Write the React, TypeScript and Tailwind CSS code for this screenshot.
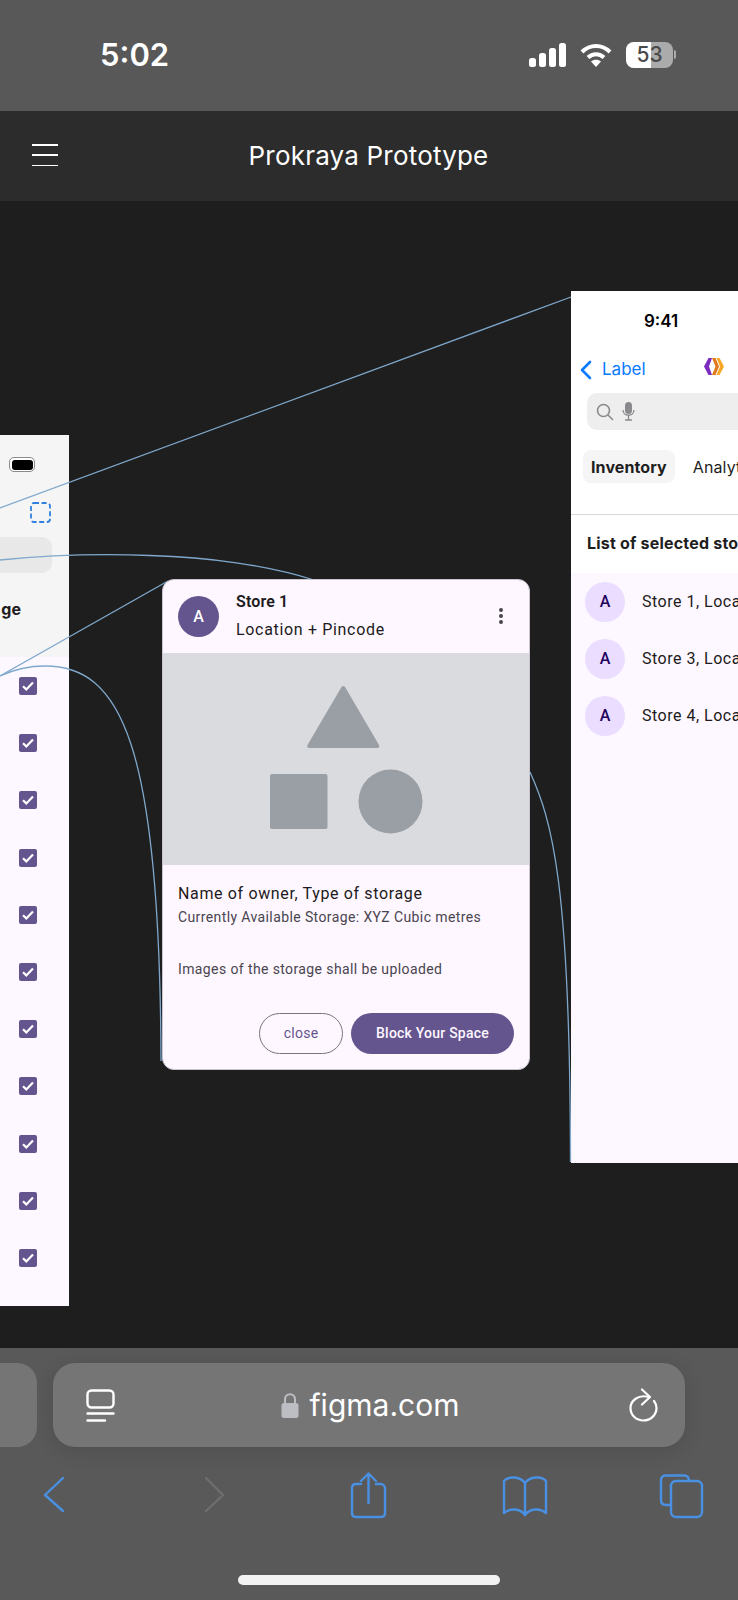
const checks = Array.from({ length: 11 });

function StatusBar() {
  return (
    <div className="h-[111px] shrink-0 bg-[#585858] flex items-center justify-between pl-[100px] pr-[62px]">
      <span className="text-[31px] leading-none font-semibold text-white -mt-[2px] font-['Inter',sans-serif]">5:02</span>
      <div className="flex items-center gap-[14px] -mt-[2px]">
        <svg width="37" height="24" viewBox="0 0 37 24" fill="#fff">
          <rect x="0" y="15" width="7" height="9" rx="2.5" />
          <rect x="10" y="10" width="7" height="14" rx="2.5" />
          <rect x="20" y="5" width="7" height="19" rx="2.5" />
          <rect x="30" y="0" width="7" height="24" rx="2.5" />
        </svg>
        <svg width="32" height="24" viewBox="0 0 32 24" fill="none" stroke="#fff" strokeWidth="4" strokeLinecap="butt">
          <path d="M2 9 C 10 1, 22 1, 30 9" />
          <path d="M8 14.5 C 12.5 10, 19.5 10, 24 14.5" />
          <path d="M16 24 L11 18.5 C 13.5 16, 18.5 16, 21 18.5 Z" fill="#fff" stroke="none" />
        </svg>
        <div className="flex items-center gap-[1px]">
          <div className="relative w-[47px] h-[26px] rounded-[8px] overflow-hidden bg-[#ababab] flex">
            <div className="w-[25px] bg-white" />
            <span className="absolute inset-0 flex items-center justify-center text-[21px] font-medium text-[#4a4a4a] font-['Inter',sans-serif]">53</span>
          </div>
          <div className="w-[2px] h-[9px] rounded-r-full bg-[#ababab]" />
        </div>
      </div>
    </div>
  );
}

function Header() {
  return (
    <div className="relative h-[90px] shrink-0 bg-[#2c2c2c] flex items-center justify-center">
      <div className="absolute left-[32px] top-[33px] w-[26px] h-[22px] flex flex-col justify-between">
        <div className="h-[1.5px] bg-white" />
        <div className="h-[1.5px] bg-white" />
        <div className="h-[1.5px] bg-white" />
      </div>
      <span className="text-[26px] leading-none text-white tracking-[0.2px] font-['Inter',sans-serif] ml-[-1px]">Prokraya Prototype</span>
    </div>
  );
}

function LeftFrame() {
  return (
    <div className="absolute left-0 top-[234px] w-[69px] h-[871px] bg-[#f5f5f5] overflow-hidden flex flex-col">
      <div className="h-[222px] shrink-0 flex flex-col items-end">
        <div className="mt-[22px] mr-[34px] w-[26px] h-[15px] rounded-[5px] border border-[#8a8a8a] p-[1.5px] bg-white">
          <div className="w-full h-full rounded-[3px] bg-black" />
        </div>
        <svg width="21" height="21" viewBox="0 0 21 21" fill="none" stroke="#2f80dc" strokeWidth="1.8" strokeDasharray="5 2.6" className="mt-[30px] mr-[18px]">
          <rect x="1" y="1" width="19" height="19" rx="3" />
        </svg>
        <div className="mt-[14px] mr-[17px] w-full h-[36px] rounded-r-[10px] bg-[#e8e8e8]" />
        <div className="mt-[21px] w-full text-[16px] font-bold leading-[30px] text-[#1d1b20] text-right pr-[48px] font-['Inter',sans-serif]">ge</div>
      </div>
      <div className="flex-1 bg-[#fdf7ff] flex flex-col items-end pr-[32px] pt-[20px] gap-[39.2px]">
        {checks.map((_, i) => (
          <div key={i} className="w-[18px] h-[18px] shrink-0 rounded-[2px] bg-[#65558f] flex items-center justify-center">
            <svg width="12" height="10" viewBox="0 0 12 10" fill="none" stroke="#fff" strokeWidth="2.2">
              <path d="M1 5.2 L4.3 8.4 L11 1.4" />
            </svg>
          </div>
        ))}
      </div>
    </div>
  );
}

function StoreCard() {
  return (
    <div className="absolute left-[162px] top-[378px] w-[368px] h-[491px] rounded-[12px] bg-[#fef7ff] border border-[#cac4d0] overflow-hidden flex flex-col font-['Roboto',sans-serif]">
      <div className="h-[73px] shrink-0 flex items-center px-[15px]">
        <div className="w-[41px] h-[41px] rounded-full bg-[#65558f] flex items-center justify-center text-white text-[16px] font-medium">A</div>
        <div className="ml-[17px] flex-1 -mt-[2px]">
          <div className="text-[16px] leading-[24px] font-semibold text-[#1d1b20] tracking-[0.15px]">Store 1</div>
          <div className="text-[16px] leading-[24px] mt-[4px] text-[#1d1b20] tracking-[0.67px]">Location + Pincode</div>
        </div>
        <svg width="4" height="16" viewBox="0 0 4 16" fill="#49454f" className="mr-[11px] -mt-[2px]">
          <circle cx="2" cy="2" r="2" />
          <circle cx="2" cy="8" r="2" />
          <circle cx="2" cy="14" r="2" />
        </svg>
      </div>
      <div className="h-[212px] shrink-0 bg-[#d9dbde] flex flex-col items-center">
        <svg width="366" height="212" viewBox="0 0 366 212" fill="#9a9ea5">
          <path d="M178.5 34 C179.5 32.5 181 32.5 182 34 L216 92 C216.8 93.7 216 95 214 95 L146.5 95 C144.5 95 143.8 93.7 144.5 92 Z" />
          <rect x="107" y="121" width="57.5" height="55" rx="2" />
          <circle cx="227.5" cy="148.5" r="32" />
        </svg>
      </div>
      <div className="flex-1 flex flex-col px-[15px]">
        <div className="mt-[17px] text-[16px] leading-[24px] text-[#1d1b20] tracking-[0.64px]">Name of owner, Type of storage</div>
        <div className="text-[14px] leading-[20px] text-[#49454f] tracking-[0.39px] mt-[1px]">Currently Available Storage: XYZ Cubic metres</div>
        <div className="mt-[32px] text-[14px] leading-[20px] text-[#49454f] tracking-[0.39px]">Images of the storage shall be uploaded</div>
        <div className="mt-[34px] flex justify-end gap-[8px]">
          <div className="w-[84px] h-[41px] rounded-full border border-[#79747e] flex items-center justify-center text-[14px] font-normal tracking-[0.25px] text-[#65558f]">close</div>
          <div className="w-[163px] h-[41px] rounded-full bg-[#65558f] flex items-center justify-center text-[14px] font-medium tracking-[0.22px] text-[#fdf7ff]">Block Your Space</div>
        </div>
      </div>
    </div>
  );
}

function RightFrame() {
  return (
    <div className="absolute left-[571px] top-[90px] w-[167px] h-[872px] bg-white overflow-hidden flex flex-col">
      <div className="h-[282px] shrink-0 flex flex-col">
        <div className="mt-[19px] pl-[73px] text-[17px] leading-[22px] font-semibold text-black font-['Inter',sans-serif]">9:41</div>
        <div className="mt-[24px] h-[28px] flex items-center pl-[8px] relative">
          <svg width="13" height="20" viewBox="0 0 13 20" fill="none" stroke="#0a7aff" strokeWidth="2.6" strokeLinecap="round" strokeLinejoin="round">
            <path d="M11 2 L3 10 L11 18" />
          </svg>
          <span className="ml-[10px] text-[17px] text-[#0a7aff] font-['Inter',sans-serif]">Label</span>
          <svg width="20" height="17" viewBox="0 0 20 17" className="absolute left-[133px] top-[2px]">
            <path d="M4.5 0 H8 L5 8.5 L8 17 H4.5 L0 8.5 Z" fill="#7b2cbf" />
            <path d="M8 0 H11.5 L15 8.5 L11.5 17 H8 L11.5 8.5 Z" fill="#e07a1f" />
            <path d="M12.5 0 H15.5 L20 8.5 L15.5 17 H12.5 L16 8.5 Z" fill="#f9a825" />
          </svg>
        </div>
        <div className="mt-[9px] ml-[16px] h-[37px] rounded-l-[10px] bg-[#eeeeee] flex items-center pl-[9px] gap-[8px]">
          <svg width="18" height="18" viewBox="0 0 18 18" fill="none" stroke="#8a8a8e" strokeWidth="1.6">
            <circle cx="7.5" cy="7.5" r="6" />
            <path d="M12 12 L17 17" />
          </svg>
          <svg width="13" height="19" viewBox="0 0 13 19" fill="none" stroke="#8a8a8e" strokeWidth="1.3">
            <rect x="3" y="0" width="7" height="12" rx="3.5" fill="#8a8a8e" stroke="none" />
            <path d="M1 8 C1 15, 12 15, 12 8 M6.5 13.5 V18 M3 18 H10" />
          </svg>
        </div>
        <div className="mt-[20px] flex items-center pl-[12px]">
          <div className="h-[33px] rounded-[8px] bg-[#f5f5f5] px-[8px] flex items-center text-[16px] font-bold text-[#1e1e1e] font-['Inter',sans-serif] tracking-[0.1px]">Inventory</div>
          <span className="ml-[18px] text-[16px] text-[#1e1e1e] font-['Inter',sans-serif] tracking-[0.1px] whitespace-nowrap">Analytics</span>
        </div>
        <div className="mt-[31px] h-px bg-[#d9d9d9]" />
        <div className="mt-[16px] pl-[16px] text-[16px] leading-[24px] font-bold text-[#1e1e1e] tracking-[0.2px] font-['Inter',sans-serif] whitespace-nowrap">List of selected stores</div>
      </div>
      <div className="flex-1 bg-[#fdf7ff] flex flex-col pt-[9px] pl-[14px] gap-[17px] font-['Roboto',sans-serif]">
        {["Store 1, Location", "Store 3, Location", "Store 4, Location"].map((s) => (
          <div key={s} className="flex items-center h-[40px]">
            <div className="w-[40px] h-[40px] shrink-0 rounded-full bg-[#eaddff] flex items-center justify-center text-[16px] font-medium text-[#21005d]">A</div>
            <span className="ml-[17px] text-[16px] text-[#1d1b20] tracking-[0.5px] whitespace-nowrap">{s}</span>
          </div>
        ))}
      </div>
    </div>
  );
}

function Connectors() {
  return (
    <svg className="absolute inset-0" width="738" height="1148" viewBox="0 0 738 1148" fill="none" stroke="#7fa8cc" strokeWidth="1.3">
      <path d="M0 307 L571 96" />
      <path d="M0 359 C60 353 110 353 150 354.5 C210 356 270 365 314 379" />
      <path d="M0 475 L168 380" />
      <path d="M0 475 C15 468 30 465 45 465 C120 465 160 540 161 860" />
      <path d="M530 571 C552 620 570 680 570.5 961" />
    </svg>
  );
}

function Canvas() {
  return (
    <div className="relative flex-1 bg-[#1e1e1e] overflow-hidden">
      <LeftFrame />
      <RightFrame />
      <Connectors />
      <StoreCard />
    </div>
  );
}

function BottomBar() {
  const blue = "#4a90e2";
  return (
    <div className="relative h-[252px] shrink-0 bg-[#595959] flex flex-col">
      <div className="mt-[15px] flex gap-[16px] h-[84px]">
        <div className="w-[37px] shrink-0 rounded-r-[20px] bg-[#757575]" />
        <div className="w-[632px] rounded-[22px] bg-[#757575] flex items-center justify-between pl-[33px] pr-[27px] shadow-[0_4px_20px_rgba(0,0,0,0.12)]">
          <svg width="29" height="33" viewBox="0 0 29 33" fill="none" stroke="#fff" strokeWidth="2.4" strokeLinecap="round">
            <rect x="1.5" y="1.5" width="26" height="17" rx="4" />
            <path d="M1.5 24.5 H27.5 M1.5 31.5 H19" />
          </svg>
          <div className="flex items-center gap-[11px] -ml-[4px]">
            <svg width="18" height="25" viewBox="0 0 18 25" fill="#bdbdc4">
              <path d="M4 11 V6.5 C4 -0.5 14 -0.5 14 6.5 V11" fill="none" stroke="#bdbdc4" strokeWidth="2" />
              <rect x="0.5" y="10" width="17" height="15" rx="2.5" />
            </svg>
            <span className="text-[30px] leading-none text-white font-['Inter',sans-serif]">figma.com</span>
          </div>
          <svg width="29" height="34" viewBox="0 0 29 34" fill="none" stroke="#fff" strokeWidth="2.2" strokeLinecap="round" strokeLinejoin="round">
            <path d="M20 9 C9 6 1.5 13 1.5 20 C1.5 27.5 7.5 32.5 14.5 32.5 C21.5 32.5 27.5 27 27.5 20 C27.5 17 26.5 15 25 13" />
            <path d="M13 1.5 L21 9 L13 16.5" />
          </svg>
        </div>
      </div>
      <div className="absolute top-[124px] left-0 w-full h-[50px]">
        <svg width="738" height="50" viewBox="0 0 738 50" fill="none" stroke={blue} strokeWidth="2.4" strokeLinecap="round" strokeLinejoin="round">
          <path d="M63 6 L45 23 L63 39" />
          <path d="M206 6 L223 23 L206 39" stroke="#6e6e6e" />
          <g>
            <path d="M361 12 H356 C353 12 352 14 352 16 V41 C352 44 354 45 356 45 H381 C384 45 385 43 385 41 V16 C385 14 383 12 381 12 H376" />
            <path d="M368.5 31 V2 M361 9 L368.5 1.5 L376 9" />
          </g>
          <g>
            <path d="M525 11 C520 4 508 4 504 9 V41 C510 36 520 36 525 43 C530 36 540 36 546 41 V9 C542 4 530 4 525 11 Z M525 11 V43" />
          </g>
          <g>
            <path d="M671 33 H666 C662.5 33 661 31 661 28 V8 C661 5 663 3.5 666 3.5 H684 C687 3.5 689 5 689 9" />
            <rect x="671" y="9" width="31" height="36" rx="5" />
          </g>
        </svg>
      </div>
      <div className="absolute top-[227px] left-[238px] w-[262px] h-[10px] rounded-full bg-[#f2f2f2]" />
    </div>
  );
}

export default function App() {
  return (
    <div className="w-[738px] h-[1600px] flex flex-col overflow-hidden bg-[#1e1e1e] font-['Inter',sans-serif]">
      <StatusBar />
      <Header />
      <Canvas />
      <BottomBar />
    </div>
  );
}
